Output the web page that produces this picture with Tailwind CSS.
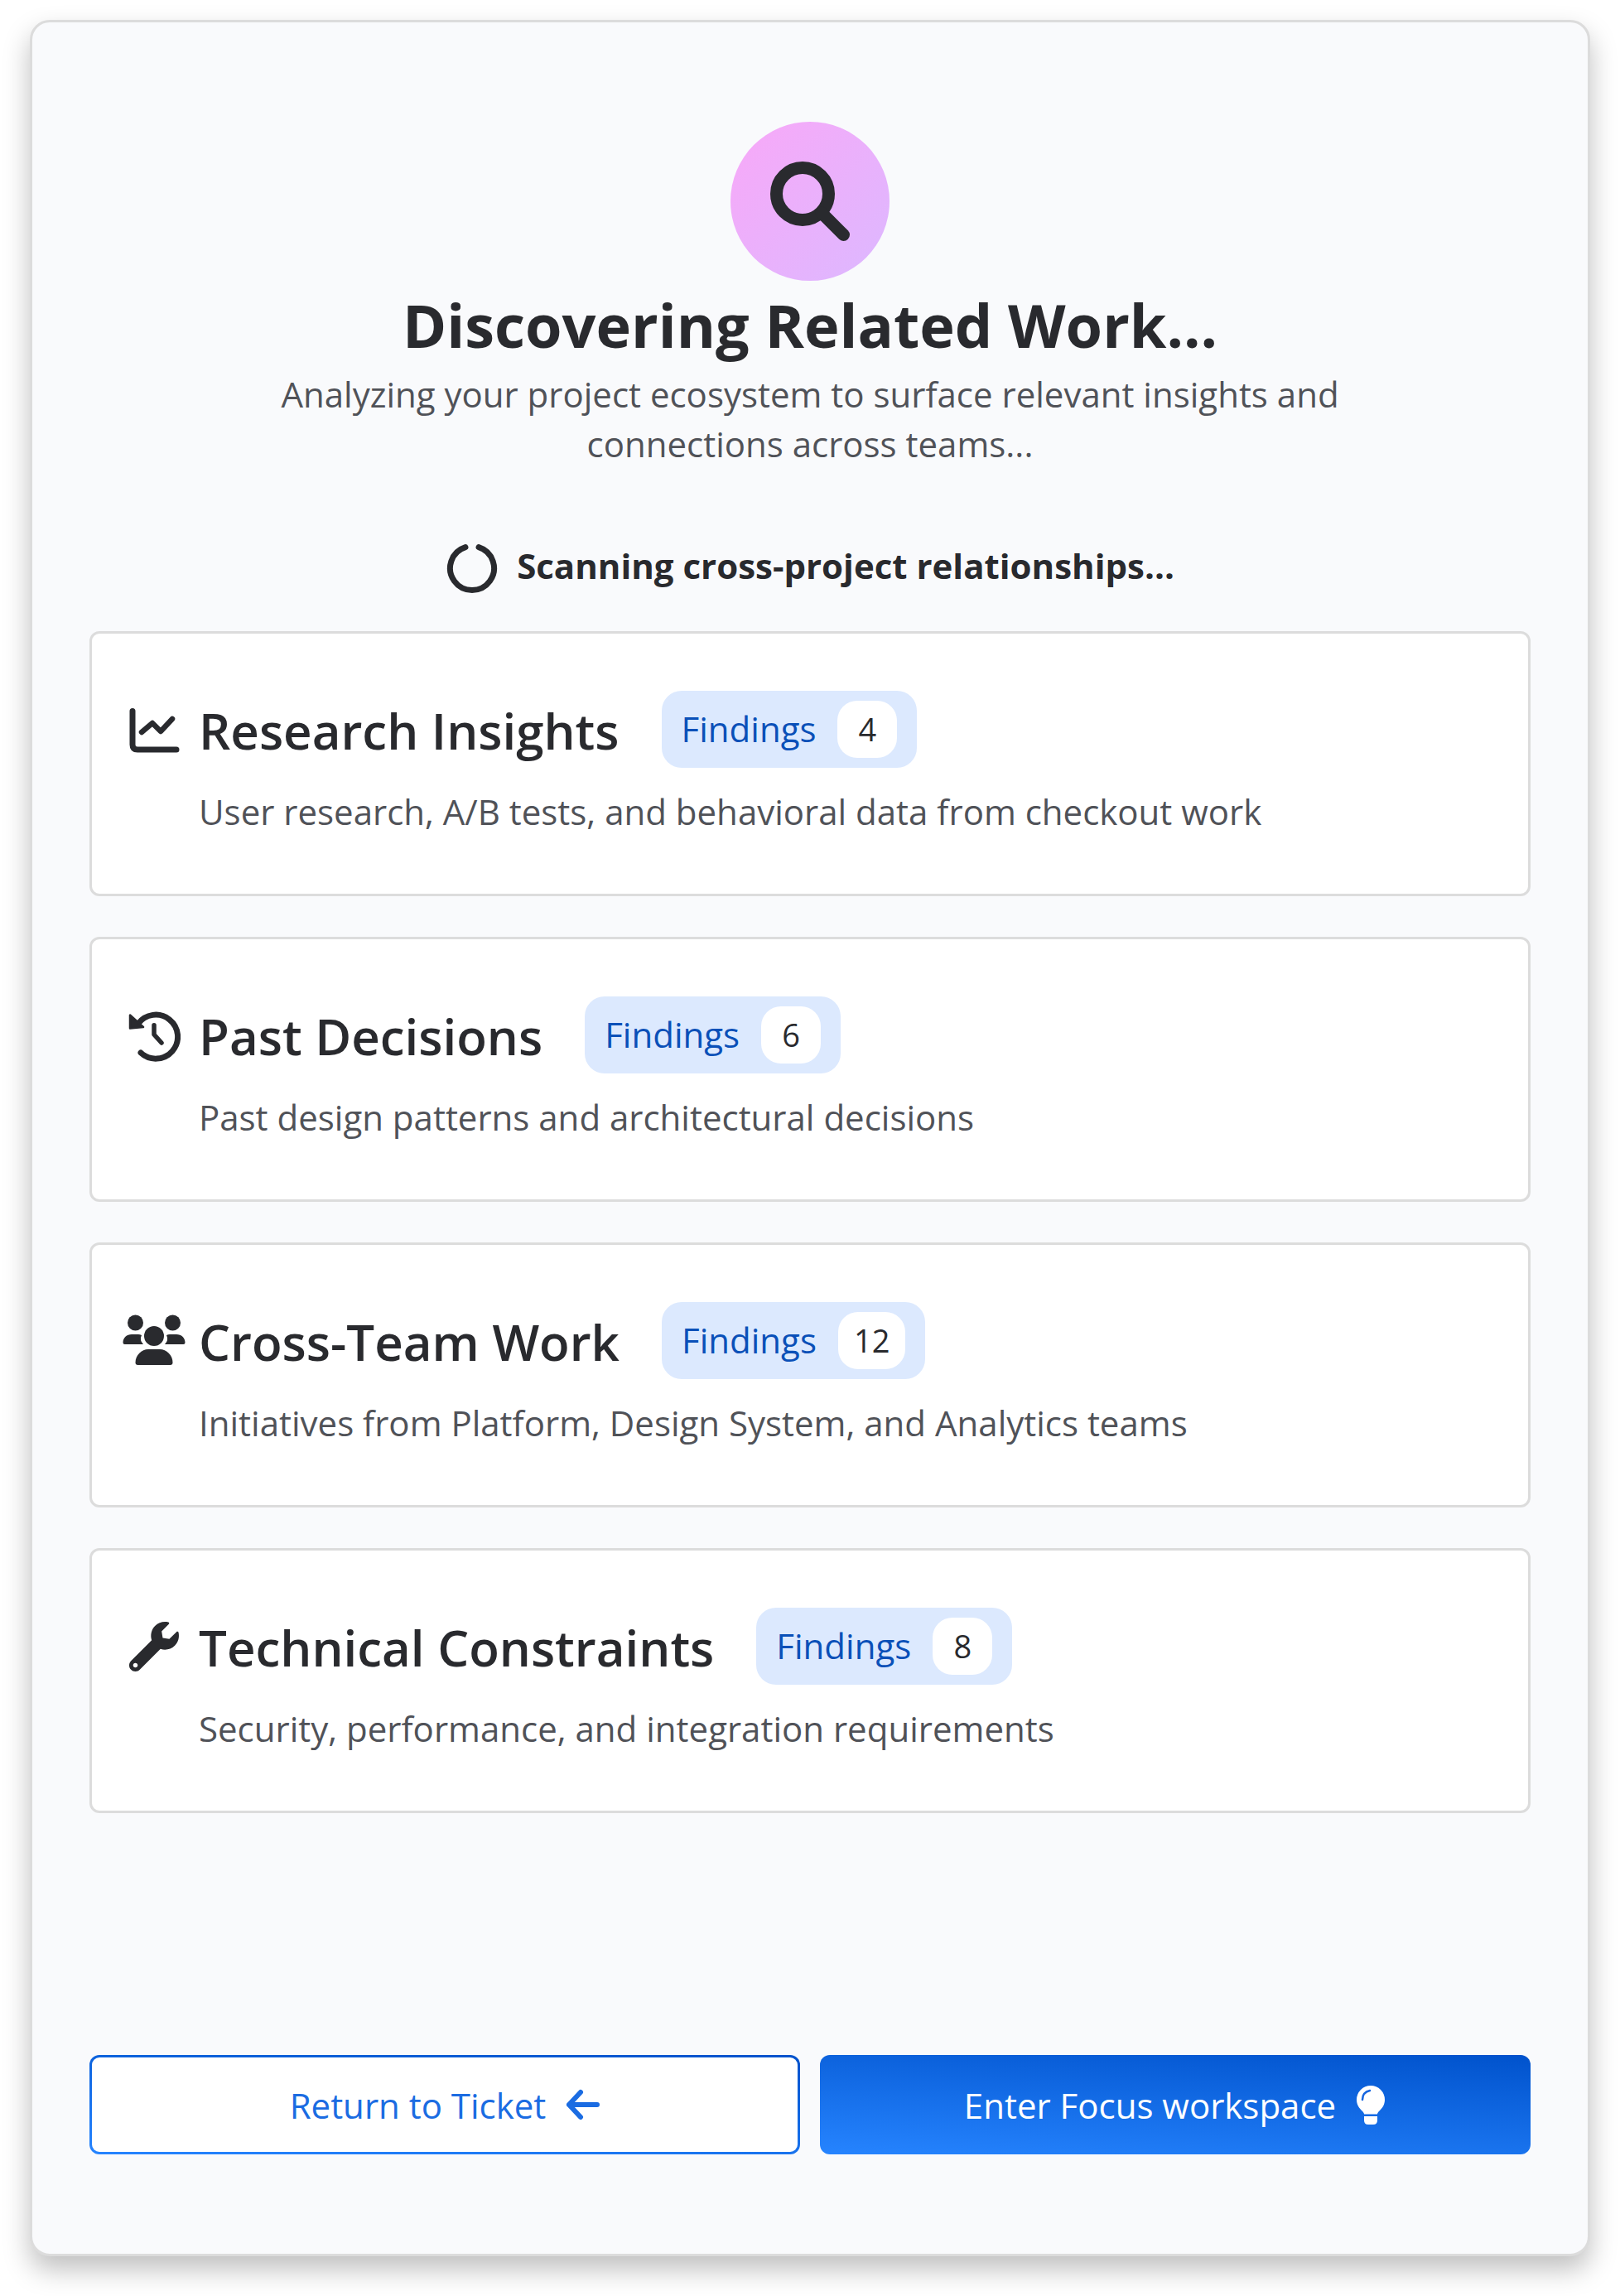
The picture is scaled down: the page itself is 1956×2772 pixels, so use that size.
<!DOCTYPE html>
<html lang="en">
<head>
    <meta charset="UTF-8">
    <meta name="viewport" content="width=device-width, initial-scale=1.0">
    <title>Discovering Related Work</title>
    <script src="https://cdn.jsdelivr.net/npm/@tailwindcss/browser@4"></script>
</head>
<body class="bg-white font-['Open_Sans',sans-serif] text-[#292a2e]">
    <div class="h-[2772px] pt-[24px] pl-[36px]">
        <div class="h-[2700px] w-[1884px] rounded-[24px] border-[3px] border-[#dcdcdc] bg-[#f9fafc] shadow-[0_16px_32px_rgba(0,0,0,0.25)] px-[69px] pt-[120px] flex flex-col">
            <div class="flex flex-col items-center">
                <div class="w-[192px] h-[192px] rounded-full bg-gradient-to-br from-[#f8a8f8] to-[#dcb8ff] flex items-center justify-center">
                    <svg class="w-[96px] h-[96px]" viewBox="0 0 96 96" fill="none" stroke="#292a2e" stroke-linecap="round">
                        <circle cx="39" cy="39" r="31.5" stroke-width="15"/>
                        <path d="M62 62 L88.5 88.5" stroke-width="15"/>
                    </svg>
                </div>
                <h1 class="mt-[5px] text-[72px] leading-[96px] font-bold">Discovering Related Work...</h1>
                <p class="mt-[6px] w-[1300px] text-center text-[42px] leading-[60px] text-[#505258]">Analyzing your project ecosystem to surface relevant insights and connections across teams...</p>
                <div class="mt-[88px] h-[64px] flex items-center gap-[22px]">
                    <svg class="w-[64px] h-[64px]" viewBox="0 0 64 64" fill="none" stroke="#292a2e" stroke-width="7" stroke-linecap="round">
                        <path d="M40 6.7 A26.5 26.5 0 1 1 24 6.7"/>
                    </svg>
                    <span class="mb-[6px] text-[42px] leading-[60px] font-bold">Scanning cross-project relationships...</span>
                </div>
            </div>

            <div class="mt-[44px] flex flex-col gap-[49px]">
                <div class="h-[320px] rounded-[12px] border-[3px] border-[#dcdcdc] bg-white pl-[43px] pt-[69px]">
                    <div class="flex items-center h-[93px]">
                        <svg class="w-[64px] h-[64px] mr-[22px] shrink-0" viewBox="0 0 64 64" fill="none" stroke="#292a2e" stroke-width="7" stroke-linecap="round" stroke-linejoin="round">
                            <path d="M6 9.5 V50 Q6 56 12 56 H59"/>
                            <path d="M17 35 L30 24 L40 34 L54 19" stroke-width="6.5"/>
                        </svg>
                        <h2 class="mt-[3px] text-[60px] leading-[80px] font-semibold">Research Insights</h2>
                        <div class="ml-[51px] h-[93px] px-[24px] rounded-[24px] bg-[#dce9fe] flex items-center gap-[26px]">
                            <span class="mb-[2px] text-[42px] text-[#0a50b8]">Findings</span>
                            <span class="h-[69px] min-w-[72px] px-[19px] rounded-[24px] bg-white flex items-center justify-center text-[38px]">4</span>
                        </div>
                    </div>
                    <p class="mt-[23px] ml-[86px] text-[42px] leading-[60px] text-[#505258]">User research, A/B tests, and behavioral data from checkout work</p>
                </div>

                <div class="h-[320px] rounded-[12px] border-[3px] border-[#dcdcdc] bg-white pl-[43px] pt-[69px]">
                    <div class="flex items-center h-[93px]">
                        <svg class="w-[64px] h-[64px] mr-[22px] shrink-0" viewBox="0 0 64 64" fill="none" stroke="#292a2e" stroke-linecap="round" stroke-linejoin="round">
                            <path d="M12.7 18 A26.5 26.5 0 1 1 16 53" stroke-width="7"/>
                            <path d="M3 7.5 L3 23.5 L19 22 Z" fill="#292a2e" stroke-width="2.5"/>
                            <path d="M32 19.7 V31 L41 41" stroke-width="5.5"/>
                        </svg>
                        <h2 class="mt-[3px] text-[60px] leading-[80px] font-semibold">Past Decisions</h2>
                        <div class="ml-[51px] h-[93px] px-[24px] rounded-[24px] bg-[#dce9fe] flex items-center gap-[26px]">
                            <span class="mb-[2px] text-[42px] text-[#0a50b8]">Findings</span>
                            <span class="h-[69px] min-w-[72px] px-[19px] rounded-[24px] bg-white flex items-center justify-center text-[38px]">6</span>
                        </div>
                    </div>
                    <p class="mt-[23px] ml-[86px] text-[42px] leading-[60px] text-[#505258]">Past design patterns and architectural decisions</p>
                </div>

                <div class="h-[320px] rounded-[12px] border-[3px] border-[#dcdcdc] bg-white pl-[43px] pt-[69px]">
                    <div class="flex items-center h-[93px]">
                        <svg class="w-[76px] h-[64px] ml-[-6.5px] mr-[16.5px] shrink-0" viewBox="0 0 76 64" fill="#292a2e">
                            <circle cx="38" cy="26" r="12"/>
                            <path d="M15.5 58 C15.5 49 23 42 31 42 H45 C53 42 60.5 49 60.5 58 Q60.5 61 57.5 61 H18.5 Q15.5 61 15.5 58 Z"/>
                            <circle cx="15.5" cy="10" r="9.5"/>
                            <circle cx="60.5" cy="10" r="9.5"/>
                            <path d="M0.5 34 C0.5 28 5 24 11 24 H19 Q21 24 23 25 Q20 31 25 36 H2.5 Q0.5 36 0.5 34 Z"/>
                            <path d="M75.5 34 C75.5 28 71 24 65 24 H57 Q55 24 53 25 Q56 31 51 36 H73.5 Q75.5 36 75.5 34 Z"/>
                        </svg>
                        <h2 class="mt-[3px] text-[60px] leading-[80px] font-semibold">Cross-Team Work</h2>
                        <div class="ml-[51px] h-[93px] px-[24px] rounded-[24px] bg-[#dce9fe] flex items-center gap-[26px]">
                            <span class="mb-[2px] text-[42px] text-[#0a50b8]">Findings</span>
                            <span class="h-[69px] min-w-[72px] px-[19px] rounded-[24px] bg-white flex items-center justify-center text-[38px]">12</span>
                        </div>
                    </div>
                    <p class="mt-[23px] ml-[86px] text-[42px] leading-[60px] text-[#505258]">Initiatives from Platform, Design System, and Analytics teams</p>
                </div>

                <div class="h-[320px] rounded-[12px] border-[3px] border-[#dcdcdc] bg-white pl-[43px] pt-[69px]">
                    <div class="flex items-center h-[93px]">
                        <svg class="w-[64px] h-[64px] mr-[22px] shrink-0" viewBox="-17 -17 546 546">
                            <path fill="#292a2e" d="M507.73 109.1c-2.24-9.03-13.54-12.09-20.12-5.51l-74.36 74.36-67.88-11.31-11.31-67.88 74.36-74.36c6.62-6.62 3.43-17.9-5.66-20.16-47.38-11.74-99.55.91-136.58 37.93-39.64 39.64-50.55 97.1-34.05 147.2L18.74 402.76c-24.99 24.99-24.99 65.51 0 90.5 24.99 24.99 65.51 24.99 90.5 0l213.21-213.21c50.12 16.71 107.47 5.68 147.37-34.22 37.07-37.07 49.7-89.32 37.91-136.73zM64 472c-13.25 0-24-10.75-24-24 0-13.26 10.75-24 24-24s24 10.74 24 24c0 13.25-10.75 24-24 24z"/>
                        </svg>
                        <h2 class="mt-[3px] text-[60px] leading-[80px] font-semibold">Technical Constraints</h2>
                        <div class="ml-[51px] h-[93px] px-[24px] rounded-[24px] bg-[#dce9fe] flex items-center gap-[26px]">
                            <span class="mb-[2px] text-[42px] text-[#0a50b8]">Findings</span>
                            <span class="h-[69px] min-w-[72px] px-[19px] rounded-[24px] bg-white flex items-center justify-center text-[38px]">8</span>
                        </div>
                    </div>
                    <p class="mt-[23px] ml-[86px] text-[42px] leading-[60px] text-[#505258]">Security, performance, and integration requirements</p>
                </div>
            </div>

            <div class="mt-[292px] grid grid-cols-2 gap-[24px]">
                <button class="h-[120px] pl-[4px] rounded-[12px] border-[3px] border-transparent bg-[linear-gradient(#fff,#fff),linear-gradient(184deg,#0052cc,#2684ff)] [background-origin:border-box] [background-clip:padding-box,border-box] flex items-center justify-center gap-[21px] text-[42px] text-[#1b6ce2]">
                    Return to Ticket
                    <svg class="w-[48px] h-[48px]" viewBox="0 0 48 48" fill="none" stroke="#1b6ce2" stroke-width="6" stroke-linecap="round" stroke-linejoin="round">
                        <path d="M41 24 H7 M21 9 L7 24 L21 39"/>
                    </svg>
                </button>
                <button class="h-[120px] pl-[1px] rounded-[12px] bg-[linear-gradient(184deg,#0052cc,#2684ff)] flex items-center justify-center gap-[22px] text-[42px] text-white">
                    Enter Focus workspace
                    <svg class="w-[40px] h-[48px]" viewBox="0 0 40 48" fill="#fff">
                        <path d="M20 1 A17 17 0 0 0 3 18 C3 24 6 28 9 31 C11 33 12 34 12 35.5 H28 C28 34 29 33 31 31 C34 28 37 24 37 18 A17 17 0 0 0 20 1 Z"/>
                        <path d="M12 38 H28 V43 Q28 48 23 48 H17 Q12 48 12 43 Z"/>
                        <path d="M10 18 Q10 9 19 7" fill="none" stroke="#1565e0" stroke-width="2.5" stroke-linecap="round"/>
                    </svg>
                </button>
            </div>
        </div>
    </div>
</body>
</html>
